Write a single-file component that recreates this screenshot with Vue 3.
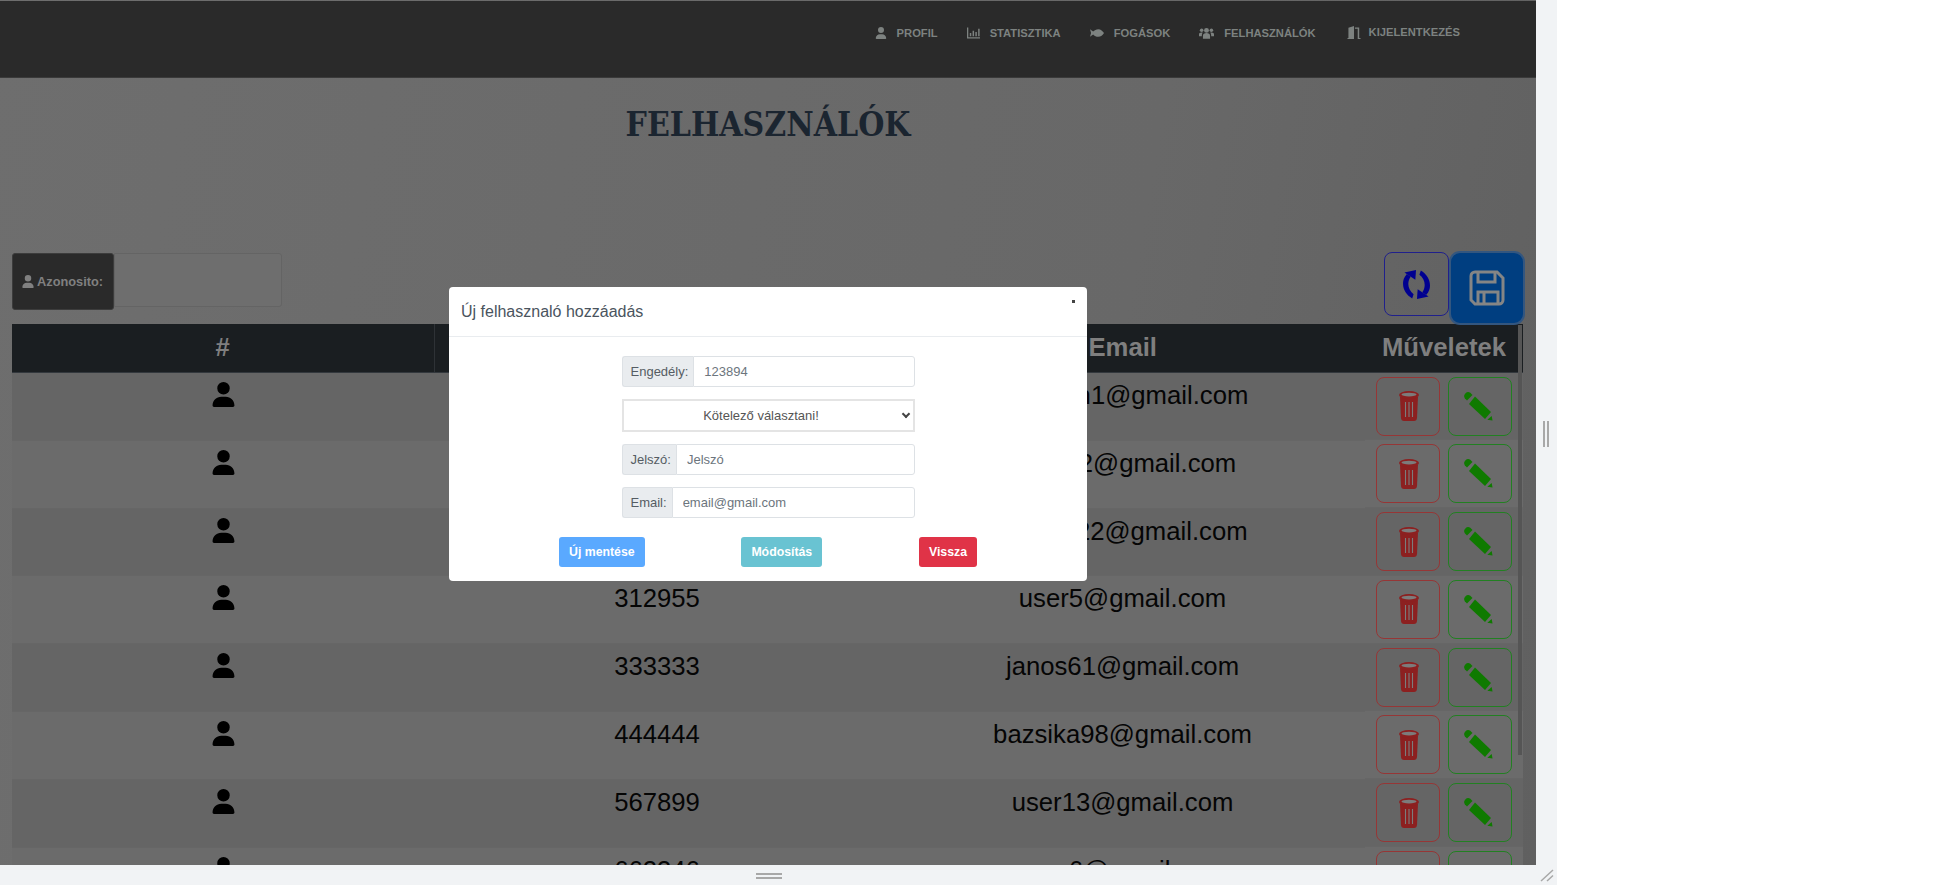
<script setup>
const menu = [
  { label: 'PROFIL', icon: 'user' },
  { label: 'STATISZTIKA', icon: 'chart' },
  { label: 'FOGÁSOK', icon: 'fish' },
  { label: 'FELHASZNÁLÓK', icon: 'users' },
  { label: 'KIJELENTKEZÉS', icon: 'door' },
]

// az első három azonosító a modal mögött van
const users = [
  { id: '', email: 'kovacsn1@gmail.com' },
  { id: '', email: 'admin2@gmail.com' },
  { id: '', email: 'andras22@gmail.com' },
  { id: '312955', email: 'user5@gmail.com' },
  { id: '333333', email: 'janos61@gmail.com' },
  { id: '444444', email: 'bazsika98@gmail.com' },
  { id: '567899', email: 'user13@gmail.com' },
  { id: '662346', email: 'user6@gmail.com' },
]

const userPath = 'M224 256A128 128 0 1 0 224 0a128 128 0 1 0 0 256zm-45.7 48C79.8 304 0 383.8 0 482.3C0 498.7 13.3 512 29.7 512H418.3c16.4 0 29.7-13.3 29.7-29.7C448 383.8 368.2 304 269.7 304H178.3z'
</script>

<template>
  <div class="frame">
    <div class="stage">
      <nav class="nav">
        <a v-for="item in menu" :key="item.label" class="nav-item" :class="{ raised: item.icon === 'door' }">
          <svg v-if="item.icon === 'user'" class="nav-icon" viewBox="0 0 448 512"><path :d="userPath" /></svg>
          <svg v-else-if="item.icon === 'chart'" class="nav-icon chart" viewBox="0 0 14 12">
            <path d="M0 0h1.400v10.600H14V12H0z" />
            <path d="M3 6h1.600v3.600H3zM6 3.500h1.600v6.100H6zM9 5h1.600v4.600H9zM12 1.500h1.600v8.100H12z" />
          </svg>
          <svg v-else-if="item.icon === 'fish'" class="nav-icon fish" viewBox="0 0 16 10">
            <path d="M0 0.800 3.600 3.400C5 1.600 7.200 0.600 9.400 0.600c3 0 5.200 2.200 6.600 4.400-1.400 2.200-3.600 4.400-6.600 4.400-2.200 0-4.400-1-5.800-2.800L0 9.200 1.200 5z" />
          </svg>
          <svg v-else-if="item.icon === 'users'" class="nav-icon wide" viewBox="0 0 16 12">
            <circle cx="8" cy="3.200" r="2.600" /><circle cx="2.800" cy="3" r="1.900" /><circle cx="13.200" cy="3" r="1.900" />
            <path d="M4.200 12V9c0-2 1.600-3 3.800-3s3.800 1 3.800 3v3zM0 9.400V7.400C0 6.200 1 5.400 2.600 5.400c.6 0 1 .1 1.400.3C3.200 6.400 3 7.400 3 9.400zM16 9.400V7.400c0-1.200-1-2-2.600-2-.6 0-1 .1-1.400.3.800.7 1 1.700 1 3.700z" />
          </svg>
          <svg v-else class="nav-icon door" viewBox="0 0 14 14">
            <path d="M0 14V13h1V2l6-2v14zM8 1.600h4.600V13H14v1h-3V3H8z" />
          </svg>
          <span>{{ item.label }}</span>
        </a>
      </nav>

      <h1 class="title">FELHASZNÁLÓK</h1>

      <div class="toolbar">
        <div class="search">
          <label class="search-label">
            <svg class="search-icon" viewBox="0 0 448 512"><path :d="userPath" /></svg>
            Azonosito:
          </label>
          <input class="search-input" type="text" />
        </div>
        <div class="tools">
          <button class="refresh" type="button">
            <svg viewBox="0 0 28 30" width="27" height="29">
              <g fill="#000090">
                <path d="M4 4C1 7.500 0 10.500 0 14c0 7 4 12 9.500 15.500L11 25C7.500 22.500 5.500 18.500 5.500 14.500 5.500 11.500 6.500 9 8 7z" />
                <path d="M13.500 0 12.800 10 1.500 2.500z" />
                <g transform="rotate(180 14 15)">
                  <path d="M4 4C1 7.500 0 10.500 0 14c0 7 4 12 9.500 15.500L11 25C7.500 22.500 5.500 18.500 5.500 14.500 5.500 11.500 6.500 9 8 7z" />
                  <path d="M13.500 0 12.800 10 1.500 2.500z" />
                </g>
              </g>
            </svg>
          </button>
          <button class="save" type="button">
            <svg viewBox="0 0 36 36" width="36" height="36">
              <path d="M2 6a4 4 0 0 1 4-4h22l6 6v22a4 4 0 0 1-4 4H6l-4-4z" fill="none" stroke="#858585" stroke-width="3" />
              <path d="M9 3v9h17V3" fill="none" stroke="#858585" stroke-width="3" />
              <path d="M9 33V22h20v11M15 23v10" fill="none" stroke="#858585" stroke-width="3" />
            </svg>
          </button>
        </div>
      </div>

      <table class="grid">
        <colgroup>
          <col class="col-icon" />
          <col class="col-id" />
          <col class="col-email" />
          <col class="col-actions" />
        </colgroup>
        <thead>
          <tr>
            <th>#</th>
            <th></th>
            <th>Email</th>
            <th class="no-line">Műveletek</th>
          </tr>
        </thead>
        <tbody>
          <tr v-for="user in users" :key="user.email">
            <td><svg class="row-user" viewBox="0 0 448 512"><path :d="userPath" /></svg></td>
            <td>{{ user.id }}</td>
            <td>{{ user.email }}</td>
            <td class="actions">
              <button class="act del" type="button">
                <svg viewBox="0 0 20 30" width="20" height="30">
                  <path d="M1 6h18l-1 21c-.1 1.800-1.300 3-3 3H5c-1.700 0-2.900-1.200-3-3z" fill="#8c2020" />
                  <ellipse cx="10" cy="4" rx="10" ry="4" fill="#8c2020" />
                  <ellipse cx="10" cy="3.600" rx="7.500" ry="1.800" fill="#7c7c7c" />
                  <path d="M6.500 11v15M10 11v15M13.500 11v15" stroke="#7c7c7c" stroke-width="1.100" />
                </svg>
              </button>
              <button class="act edit" type="button">
                <svg viewBox="0 0 29 29" width="29" height="29">
                  <path d="M3 8.500.8 6.300A4 4 0 0 1 6.300.8L8.500 3z" fill="#0f7a00" />
                  <path d="M11 4.500 27 20 21 27 5 12z" fill="#0f7a00" />
                  <path d="M23.300 27.700 27.700 24 28.500 28.500z" fill="#0f7a00" />
                </svg>
              </button>
            </td>
          </tr>
        </tbody>
      </table>

      <div class="thumb"></div>

      <div class="modal">
        <header class="modal-head">
          <h5>Új felhasznaló hozzáadás</h5>
          <span class="close"></span>
        </header>
        <div class="modal-body">
          <div class="field">
            <span class="addon">Engedély:</span>
            <input class="control" type="text" placeholder="123894" />
          </div>
          <div class="picker-wrap">
            <select class="picker">
              <option>Kötelező választani!</option>
            </select>
          </div>
          <div class="field">
            <span class="addon">Jelszó:</span>
            <input class="control" type="text" placeholder="Jelszó" />
          </div>
          <div class="field">
            <span class="addon">Email:</span>
            <input class="control" type="text" placeholder="email@gmail.com" />
          </div>
        </div>
        <footer class="modal-actions">
          <button class="btn blue" type="button">Új mentése</button>
          <button class="btn teal" type="button">Módosítás</button>
          <button class="btn red" type="button">Vissza</button>
        </footer>
      </div>
    </div>

    <div class="gutter-right">
      <span class="grip-v"></span>
    </div>
    <div class="gutter-bottom">
      <span class="grip-h"></span>
      <svg class="corner" viewBox="0 0 14 13" width="14" height="13">
        <path d="M1 12 13 1M7 12 13 6.500" stroke="#a8a8a8" stroke-width="1.500" />
      </svg>
    </div>
  </div>
</template>

<style scoped>
.frame {
  display: grid;
  grid-template-columns: 1536px 21px;
  grid-template-rows: 865px 20px;
  font-family: "Liberation Sans", Arial, sans-serif;
}

.stage {
  position: relative;
  overflow: hidden;
  background: linear-gradient(100deg, #6e6e6e 0%, #686868 70%, #606060 100%);
}

.nav {
  display: flex;
  justify-content: flex-end;
  gap: 29px;
  height: 77px;
  margin-top: 1px;
  padding: 24px 76px 0 0;
  box-sizing: border-box;
  background: #2a2a2a;
  border-bottom: 1px solid #3a3a3a;
}

.nav-item {
  display: flex;
  align-items: center;
  gap: 10px;
  height: 16px;
  font-size: 11.2px;
  font-weight: 700;
  color: #7d8280;
}

.nav-item.raised {
  margin-top: -1px;
  margin-left: 2px;
  gap: 8px;
}

.nav-icon {
  width: 12px;
  height: 12px;
  fill: #7d8280;
}

.nav-icon.chart { width: 13px; }
.nav-icon.fish { width: 14px; }
.nav-icon.wide { width: 15px; }
.nav-icon.door { width: 14px; height: 13px; }

.title {
  margin: 0;
  padding-top: 25px;
  height: 170px;
  box-sizing: border-box;
  text-align: center;
  font-family: "DejaVu Serif", "Liberation Serif", serif;
  font-stretch: condensed;
  font-size: 33.4px;
  line-height: 44px;
  font-weight: 700;
  color: #1b2530;
}

.toolbar {
  display: flex;
  justify-content: space-between;
  align-items: flex-start;
  height: 73px;
  padding: 3px 11px 0 12px;
}

.search {
  display: flex;
  align-items: flex-start;
  margin-top: 2px;
}

.search-label {
  display: flex;
  align-items: center;
  gap: 3px;
  width: 102px;
  height: 57px;
  padding-left: 9px;
  box-sizing: border-box;
  background: #2a2a2a;
  border: 1px solid #3c3c3c;
  border-radius: 3px;
  font-size: 12.8px;
  font-weight: 700;
  color: #808080;
}

.search-icon {
  width: 12px;
  height: 13px;
  fill: #808080;
}

.search-input {
  width: 168px;
  height: 54px;
  box-sizing: border-box;
  background: #6e6e6e;
  border: 1px solid #646464;
  border-radius: 0 3px 3px 0;
}

.tools {
  display: flex;
  align-items: flex-start;
}

.refresh {
  display: flex;
  align-items: center;
  justify-content: center;
  width: 65px;
  height: 64px;
  margin-top: 1px;
  padding: 0;
  background: transparent;
  border: 1px solid #20208c;
  border-radius: 8px;
}

.save {
  display: flex;
  align-items: center;
  justify-content: center;
  width: 76px;
  height: 74px;
  padding: 0;
  background: #003e80;
  border: 2px solid #33567f;
  border-radius: 11px;
}

.grid {
  width: 1511px;
  margin-left: 12px;
  border-collapse: collapse;
  table-layout: fixed;
}

.col-icon { width: 422px; }
.col-id { width: 446px; }
.col-email { width: 485px; }
.col-actions { width: 158px; }

.grid th {
  height: 48px;
  padding: 0;
  background: #1a1e21;
  border-bottom: 1px solid #33383d;
  border-left: 1px solid #2e3236;
  font-size: 25.7px;
  font-weight: 700;
  color: #7f7f7f;
  box-sizing: border-box;
}

.grid th:first-child,
.grid th.no-line {
  border-left: 0;
}

.grid td {
  height: 67.8px;
  padding: 2px 0 0;
  box-sizing: border-box;
  vertical-align: top;
  text-align: center;
  font-size: 25.7px;
  line-height: 40px;
  color: #050505;
  border-bottom: 1px solid #666;
}

.grid tbody tr:nth-child(odd) td {
  background: #656565;
}

.grid tbody tr:nth-child(even) td {
  background: #6b6b6b;
}

.row-user {
  display: block;
  width: 23px;
  height: 25px;
  margin: 7px auto 0;
  fill: #000;
}

.grid td.actions {
  display: flex;
  gap: 8px;
  padding: 4px 0 0 11px;
}

.act {
  display: flex;
  align-items: center;
  justify-content: center;
  width: 64px;
  height: 59px;
  padding: 0;
  background: transparent;
  border-radius: 8px;
}

.act.del {
  border: 1px solid #963636;
}

.act.del svg {
  margin-left: 2px;
}

.act.edit {
  border: 1px solid #228022;
}

.act.edit svg {
  margin-right: 3px;
}

.thumb {
  position: absolute;
  left: 1518px;
  top: 325px;
  width: 4px;
  height: 430px;
  background: #555;
}

.modal {
  position: absolute;
  left: 449px;
  top: 287px;
  display: flex;
  flex-direction: column;
  width: 638px;
  height: 294px;
  background: #fff;
  border-radius: 4px;
}

.modal-head {
  position: relative;
  display: flex;
  align-items: center;
  height: 50px;
  padding-left: 12px;
  box-sizing: border-box;
  border-bottom: 1px solid #e9ecef;
}

.modal-head h5 {
  margin: 0;
  font-size: 16px;
  font-weight: 400;
  color: #4a545e;
}

.close {
  position: absolute;
  left: 623px;
  top: 13px;
  width: 3px;
  height: 3px;
  background: #444;
}

.modal-body {
  display: flex;
  flex-direction: column;
  align-items: center;
  gap: 12px;
  padding-top: 19px;
}

.field {
  display: flex;
  width: 293px;
  height: 31px;
}

.addon {
  display: flex;
  align-items: center;
  padding: 0 5px 0 8px;
  background: #e9ecef;
  border: 1px solid #dde1e5;
  border-right: 0;
  border-radius: 3px 0 0 3px;
  font-size: 13px;
  color: #555c63;
}

.control {
  flex: 1;
  min-width: 0;
  padding: 0 10px;
  box-sizing: border-box;
  border: 1px solid #dde1e5;
  border-radius: 0 3px 3px 0;
  font-family: inherit;
  font-size: 13px;
  color: #495057;
}

.control::placeholder {
  color: #6c757d;
}

.picker-wrap {
  position: relative;
  width: 293px;
  height: 33px;
}

.picker-wrap::after {
  content: "";
  position: absolute;
  right: 6px;
  top: 12px;
  width: 4px;
  height: 4px;
  border-right: 2px solid #444;
  border-bottom: 2px solid #444;
  transform: rotate(45deg);
  pointer-events: none;
}

.picker {
  appearance: none;
  display: block;
  width: 100%;
  height: 33px;
  padding: 0 14px 0 0;
  box-sizing: border-box;
  background: #fff;
  border: 2px solid #e4e4e4;
  border-radius: 0;
  font-family: inherit;
  font-size: 13px;
  color: #555;
  text-align-last: center;
}

.modal-actions {
  display: flex;
  justify-content: space-between;
  margin-top: 19px;
  padding: 0 110px;
}

.btn {
  height: 30px;
  padding: 0 10px;
  border: 0;
  border-radius: 3px;
  font-family: inherit;
  font-size: 12.3px;
  font-weight: 700;
  color: #fff;
}

.btn.blue { background: #5aa9ff; }
.btn.teal { background: #69c3d2; }
.btn.red { background: #e03347; }

.gutter-right {
  display: flex;
  align-items: center;
  background: #f1f3f5;
}

.grip-v {
  width: 2px;
  height: 26px;
  margin: 2px 0 0 7px;
  border-left: 2px solid #a8a8a8;
  border-right: 2px solid #a8a8a8;
}

.gutter-bottom {
  position: relative;
  grid-column: 1 / 3;
  display: flex;
  justify-content: center;
  background: #f1f3f5;
}

.grip-h {
  width: 26px;
  height: 2px;
  margin: 8px 20px 0 0;
  border-top: 2px solid #a8a8a8;
  border-bottom: 2px solid #a8a8a8;
}

.corner {
  position: absolute;
  right: 3px;
  top: 4px;
}
</style>

<style>
html, body {
  background: #fff;
  overflow: hidden;
}
</style>
